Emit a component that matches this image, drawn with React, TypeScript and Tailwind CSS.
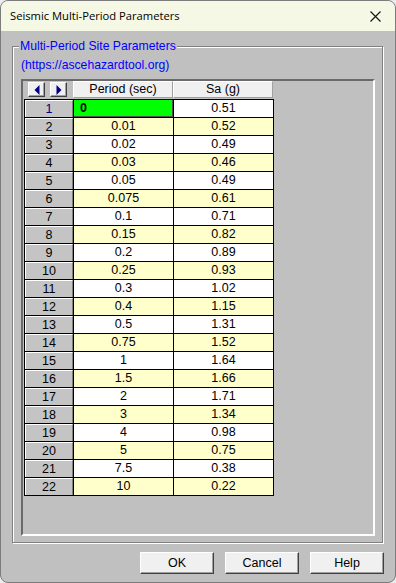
import React from "react";

const ROWS: [string, string][] = [
  ["0", "0.51"],
  ["0.01", "0.52"],
  ["0.02", "0.49"],
  ["0.03", "0.46"],
  ["0.05", "0.49"],
  ["0.075", "0.61"],
  ["0.1", "0.71"],
  ["0.15", "0.82"],
  ["0.2", "0.89"],
  ["0.25", "0.93"],
  ["0.3", "1.02"],
  ["0.4", "1.15"],
  ["0.5", "1.31"],
  ["0.75", "1.52"],
  ["1", "1.64"],
  ["1.5", "1.66"],
  ["2", "1.71"],
  ["3", "1.34"],
  ["4", "0.98"],
  ["5", "0.75"],
  ["7.5", "0.38"],
  ["10", "0.22"],
];

const arial = "font-['Liberation_Sans',Arial,sans-serif]";

function ArrowButton({ dir }: { dir: "left" | "right" }) {
  return (
    <div className="flex h-[15px] w-[17px] items-center justify-center border border-t-white border-l-white border-r-[#404040] border-b-[#404040] bg-[#f0f0f0] shadow-[inset_-1px_-1px_0_#a0a0a0]">
      <svg width="6" height="10" viewBox="0 0 6 10">
        {dir === "left" ? (
          <polygon points="5.5,0 5.5,10 0.5,5" fill="#000080" />
        ) : (
          <polygon points="0.5,0 0.5,10 5.5,5" fill="#000080" />
        )}
      </svg>
    </div>
  );
}

function DialogButton({ label }: { label: string }) {
  return (
    <button className="h-[22px] w-[74px] border border-t-white border-l-white border-r-[#404040] border-b-[#404040] bg-[#f0f0f0] text-[12.5px] text-black shadow-[inset_-1px_-1px_0_#a0a0a0]">
      {label}
    </button>
  );
}

export default function App() {
  return (
    <div className={`h-[583px] w-[396px] bg-[#ececec] ${arial}`}>
      <div className="flex h-full flex-col overflow-hidden rounded-[8px] border border-[#7c7c7c] bg-[#c0c0c0]">
        {/* Title bar */}
        <div className="flex h-[30px] shrink-0 items-center justify-between bg-[#f4f8e4] pl-[9px] pr-[10px]">
          <span className="font-['Open_Sans',sans-serif] text-[11.2px] text-black">
            Seismic Multi-Period Parameters
          </span>
          <svg width="11" height="11" viewBox="0 0 11 11" className="mr-[4px]">
            <path d="M0.5 0.5 L10.5 10.5 M10.5 0.5 L0.5 10.5" stroke="#111" strokeWidth="1.1" />
          </svg>
        </div>

        {/* Body */}
        <div className="flex flex-1 flex-col pl-[11px] pt-[15px]">
          {/* Group box */}
          <div className="relative flex h-[497px] w-[371px] flex-col border border-[#808080] pb-[6px] pl-[8px] pr-[7px] shadow-[1px_1px_0_#fff,inset_1px_1px_0_#fff]">
            <span className="absolute -top-[9px] left-[6px] bg-[#c0c0c0] px-[1px] text-[12.2px] leading-[16px] text-[#0000ff]">
              Multi-Period Site Parameters
            </span>
            <div className="mt-[10px] h-[16px] text-[12.2px] leading-[16px] text-[#0000ff]">
              (https://ascehazardtool.org)
            </div>

            {/* Grid container */}
            <div className="mt-[6px] h-[457px] border-2 border-t-[#6a6a6a] border-l-[#6a6a6a] border-r-white border-b-white pl-[1px] text-[12.5px] text-black">
              {/* Header row */}
              <div className="flex h-[18px]">
                <div className="flex w-[49px] items-start gap-[5px] pl-[4px] pt-[1px]">
                  <ArrowButton dir="left" />
                  <ArrowButton dir="right" />
                </div>
                {["Period (sec)", "Sa (g)"].map((h) => (
                  <div
                    key={h}
                    className="flex h-[17px] w-[100px] items-center justify-center border border-t-white border-l-white border-r-[#a0a0a0] border-b-[#a0a0a0] bg-[#f0f0f0]"
                  >
                    {h}
                  </div>
                ))}
              </div>

              {/* Data rows */}
              <div className="w-[250px] border-t border-l border-r border-black">
                {ROWS.map(([p, sa], i) => {
                  const bg = i % 2 === 0 ? "bg-white" : "bg-[#ffffcc]";
                  return (
                    <div key={i} className="flex h-[18px] border-b border-black">
                      <div
                        className={`flex w-[48px] items-center justify-center border-t border-l border-r border-t-white border-l-white border-r-[#808080] bg-[#c4c4c4] ${
                          i === 0 ? "text-[#000080]" : "text-black"
                        }`}
                      >
                        {i + 1}
                      </div>
                      {i === 0 ? (
                        <div className="flex w-[100px] items-center border-l border-black bg-[#00ff00] pl-[6px] font-bold shadow-[inset_-1px_-1px_0_#505050]">
                          {p}
                        </div>
                      ) : (
                        <div className={`flex w-[100px] items-center justify-center border-l border-black ${bg}`}>
                          {p}
                        </div>
                      )}
                      <div className={`flex w-[100px] items-center justify-center border-l border-black ${bg}`}>
                        {sa}
                      </div>
                    </div>
                  );
                })}
              </div>
            </div>
          </div>

          {/* Buttons */}
          <div className="mt-[9px] flex gap-[11px] pl-[128px]">
            <DialogButton label="OK" />
            <DialogButton label="Cancel" />
            <DialogButton label="Help" />
          </div>
        </div>
      </div>
    </div>
  );
}
